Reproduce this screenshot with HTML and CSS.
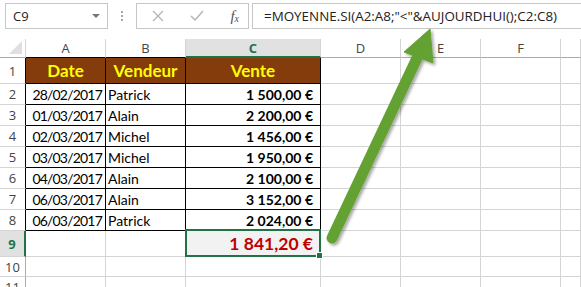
FILE: index.html
```html
<!DOCTYPE html>
<html>
<head>
  <title>MOYENNE.SI</title>
  <link rel="stylesheet" href="styles.css">
</head>
<body>
  <div class="formula-bar">
    <div class="name-box">
      <span>C9</span>
      <span class="caret"></span>
    </div>
    <div class="grip"><i></i><i></i><i></i></div>
    <div class="fx-buttons">
      <svg class="btn" width="12" height="12" viewBox="0 0 12 12"><path d="M1 1 L11 11 M11 1 L1 11" stroke="#b4b4b4" stroke-width="1.3" fill="none"/></svg>
      <svg class="btn" width="14" height="12" viewBox="0 0 14 12"><path d="M1 6 L5 10 L13 1" stroke="#b4b4b4" stroke-width="1.5" fill="none"/></svg>
      <span class="fx">f<sub>x</sub></span>
    </div>
    <div class="formula">=MOYENNE.SI(A2:A8;"&lt;"&amp;AUJOURDHUI();C2:C8)</div>
  </div>

  <div class="sheet">
    <div class="c corner"><span class="tri"></span></div>
    <div class="c col-head dark">A</div>
    <div class="c col-head dark">B</div>
    <div class="c col-head active">C</div>
    <div class="c col-head">D</div>
    <div class="c col-head">E</div>
    <div class="c col-head">F</div>
    <div class="c col-head"></div>

    <div class="c row-head dark">1</div>
    <div class="c t title">Date</div>
    <div class="c t title">Vendeur</div>
    <div class="c t title">Vente</div>
    <div class="c"></div><div class="c"></div><div class="c"></div><div class="c"></div>

    <div class="c row-head dark">2</div>
    <div class="c t date">28/02/2017</div>
    <div class="c t name">Patrick</div>
    <div class="c t amount">1 500,00 €</div>
    <div class="c"></div><div class="c"></div><div class="c"></div><div class="c"></div>

    <div class="c row-head dark">3</div>
    <div class="c t date">01/03/2017</div>
    <div class="c t name">Alain</div>
    <div class="c t amount">2 200,00 €</div>
    <div class="c"></div><div class="c"></div><div class="c"></div><div class="c"></div>

    <div class="c row-head dark">4</div>
    <div class="c t date">02/03/2017</div>
    <div class="c t name">Michel</div>
    <div class="c t amount">1 456,00 €</div>
    <div class="c"></div><div class="c"></div><div class="c"></div><div class="c"></div>

    <div class="c row-head dark">5</div>
    <div class="c t date">03/03/2017</div>
    <div class="c t name">Michel</div>
    <div class="c t amount">1 950,00 €</div>
    <div class="c"></div><div class="c"></div><div class="c"></div><div class="c"></div>

    <div class="c row-head dark">6</div>
    <div class="c t date">04/03/2017</div>
    <div class="c t name">Alain</div>
    <div class="c t amount">2 100,00 €</div>
    <div class="c"></div><div class="c"></div><div class="c"></div><div class="c"></div>

    <div class="c row-head dark">7</div>
    <div class="c t date">06/03/2017</div>
    <div class="c t name">Alain</div>
    <div class="c t amount">3 152,00 €</div>
    <div class="c"></div><div class="c"></div><div class="c"></div><div class="c"></div>

    <div class="c row-head dark">8</div>
    <div class="c t date">06/03/2017</div>
    <div class="c t name">Patrick</div>
    <div class="c t amount">2 024,00 €</div>
    <div class="c"></div><div class="c"></div><div class="c"></div><div class="c"></div>

    <div class="c row-head active">9</div>
    <div class="c"></div>
    <div class="c"></div>
    <div class="c result">1 841,20 €</div>
    <div class="c"></div><div class="c"></div><div class="c"></div><div class="c"></div>

    <div class="c row-head">10</div>
    <div class="c"></div><div class="c"></div><div class="c"></div>
    <div class="c"></div><div class="c"></div><div class="c"></div><div class="c"></div>

    <div class="c row-head">11</div>
    <div class="c"></div><div class="c"></div><div class="c"></div>
    <div class="c"></div><div class="c"></div><div class="c"></div><div class="c"></div>
  </div>

  <svg class="arrow" width="581" height="287" viewBox="0 0 581 287">
    <defs>
      <filter id="shade" x="-20%" y="-20%" width="140%" height="140%">
        <feDropShadow dx="2" dy="2" stdDeviation="1.5" flood-color="#000" flood-opacity="0.35"/>
      </filter>
    </defs>
    <g filter="url(#shade)" fill="#63a232" stroke="#63a232">
      <line x1="332" y1="238" x2="417" y2="58" stroke-width="11" stroke-linecap="round"/>
      <polygon points="430,29 404,52 433,63" stroke-width="1" stroke-linejoin="round"/>
    </g>
  </svg>
</body>
</html>
```

FILE: styles.css
```css
body {
  margin: 0;
  width: 581px;
  height: 287px;
  overflow: hidden;
  background: #ffffff;
  position: relative;
  font-family: "Open Sans", "Noto Sans", sans-serif;
}
.formula-bar {
  display: flex;
  align-items: center;
  height: 26px;
  padding: 3px 0 0 5px;
  margin-bottom: 10px;
}
.name-box {
  box-sizing: border-box;
  width: 103px;
  height: 26px;
  border: 1px solid #c6c6c6;
  display: flex;
  align-items: center;
  justify-content: space-between;
  padding: 0 7px 0 7px;
  font-size: 13px;
  color: #222;
}
.caret {
  width: 0;
  height: 0;
  border-left: 4px solid transparent;
  border-right: 4px solid transparent;
  border-top: 4px solid #777;
}
.grip {
  width: 28px;
  display: flex;
  flex-direction: column;
  align-items: center;
  gap: 2px;
}
.grip i {
  display: block;
  width: 2px;
  height: 2px;
  background: #a6a6a6;
}
.fx-buttons {
  box-sizing: border-box;
  width: 113px;
  height: 26px;
  border: 1px solid #c6c6c6;
  display: flex;
  align-items: center;
  justify-content: space-between;
  padding: 0 9px 0 15px;
}
.fx {
  font-family: "Liberation Serif", serif;
  font-style: italic;
  font-size: 15px;
  color: #555;
  line-height: 1;
}
.fx sub {
  font-size: 10px;
  vertical-align: -1px;
}
.formula {
  box-sizing: border-box;
  flex: 1;
  height: 26px;
  margin-left: 3px;
  border: 1px solid #c6c6c6;
  border-right: none;
  padding-left: 11px;
  display: flex;
  align-items: center;
  font-size: 13.4px;
  color: #222;
  white-space: nowrap;
}
.sheet {
  display: grid;
  grid-template-columns: 26px 80px 80px 135px 80px 80px 80px 1fr;
  grid-template-rows: 19px 26px repeat(7, 21px) 26px 20px 20px;
}
.c {
  box-sizing: border-box;
  border-right: 1px solid #d4d4d4;
  border-bottom: 1px solid #d4d4d4;
  overflow: hidden;
  white-space: nowrap;
  display: flex;
  align-items: flex-end;
  font-family: Lato, sans-serif;
  font-size: 14px;
  line-height: 18px;
  color: #000;
}
.corner {
  position: relative;
  border-bottom-color: #ababab;
}
.tri {
  position: absolute;
  right: 3px;
  bottom: 3px;
  width: 0;
  height: 0;
  border-left: 13px solid transparent;
  border-bottom: 13px solid #dfdfdf;
}
.col-head,
.row-head {
  align-items: center;
  justify-content: center;
  font-family: "Open Sans", "Noto Sans", sans-serif;
  font-size: 13px;
  color: #444;
}
.col-head {
  border-bottom-color: #ababab;
}
.row-head {
  border-right-color: #ababab;
}
.col-head.dark {
  border-bottom-color: #000;
}
.row-head.dark {
  border-right-color: #000;
}
.col-head.active {
  background: #e1e1e1;
  color: #217346;
  font-weight: bold;
  border-bottom: 2px solid #217346;
}
.row-head.active {
  background: #e1e1e1;
  color: #217346;
  font-weight: bold;
  border-right: 2px solid #217346;
}
.t {
  border-right-color: #000;
  border-bottom-color: #000;
}
.title {
  background: #843c0c;
  color: #ffff00;
  font-weight: bold;
  font-size: 17px;
  justify-content: center;
  align-items: center;
  line-height: 20px;
}
.date {
  justify-content: flex-end;
  padding-right: 3px;
  letter-spacing: -0.8px;
}
.name {
  padding-left: 2px;
}
.amount {
  justify-content: flex-end;
  padding-right: 7px;
  font-weight: bold;
}
.result {
  position: relative;
  overflow: visible;
  background: #f2f2f2;
  justify-content: flex-end;
  align-items: center;
  padding-right: 7px;
  font-size: 17.5px;
  font-weight: bold;
  color: #c00000;
}
.result::before {
  content: "";
  position: absolute;
  top: -2px;
  left: -1px;
  right: -1px;
  bottom: -1px;
  border: 2px solid #217346;
}
.result::after {
  content: "";
  position: absolute;
  right: -3px;
  bottom: -3px;
  width: 5px;
  height: 5px;
  background: #217346;
  border: 1px solid #fff;
}
.arrow {
  position: absolute;
  top: 0;
  left: 0;
  pointer-events: none;
}
```
